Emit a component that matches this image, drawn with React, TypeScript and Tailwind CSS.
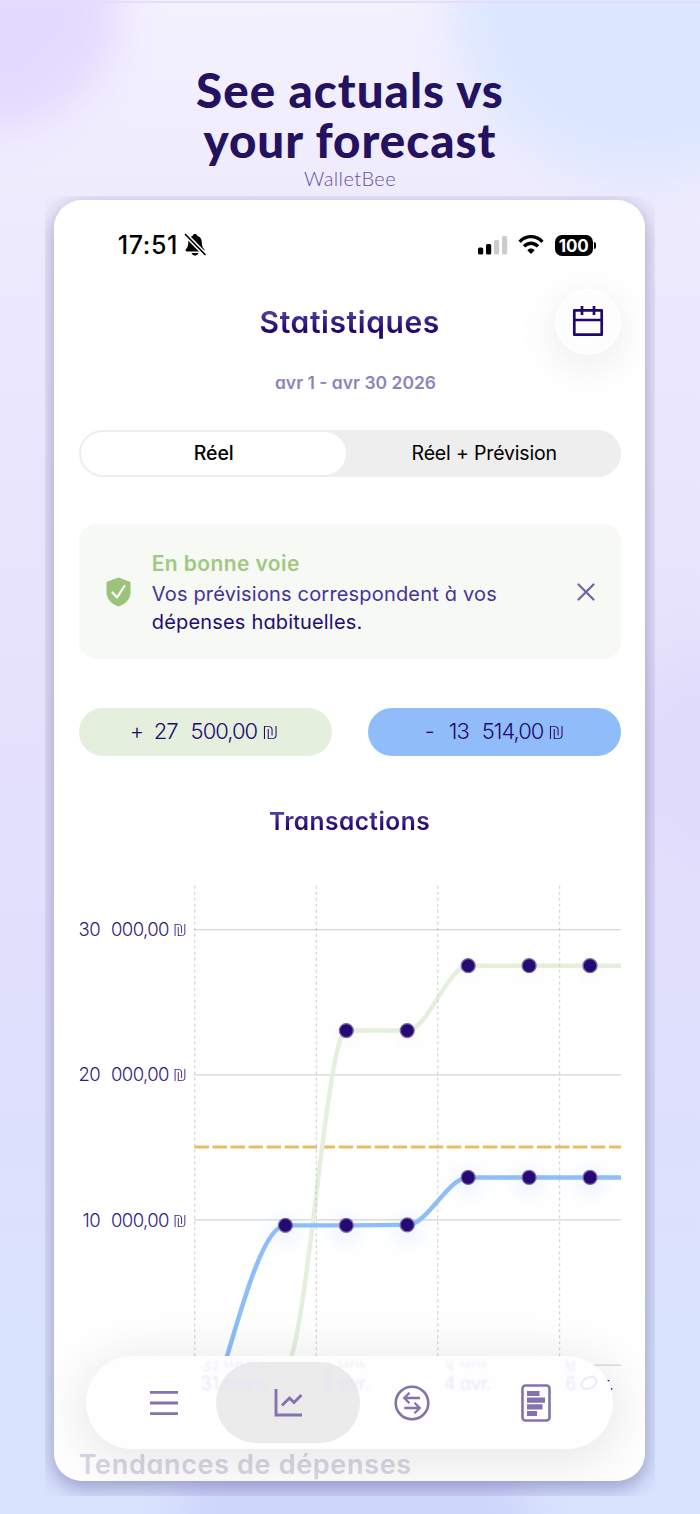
import React from "react";

const gradientText = "bg-[linear-gradient(180deg,#503d9c_22%,#210870_72%)] bg-clip-text text-transparent";

function StatusBar() {
  return (
    <div className="flex h-7 items-center pl-[63.500px] pr-[49px]">
      <span className="w-[62px] whitespace-nowrap text-[25px] leading-[26px] font-medium tracking-[0.6px] text-black">17:51</span>
      <svg className="ml-1" width="22" height="24" viewBox="0 0 22 24">
        <path d="M11 1c1.200 0 2 .7 2.200 1.700 3 .9 4.500 3.200 4.600 6.300.1 4 .8 5.500 2.300 7.100.9 1 .4 2.400-1 2.400H3c-1.400 0-1.900-1.400-1-2.400 1.500-1.600 2.200-3.100 2.300-7.100.1-3.100 1.600-5.400 4.500-6.300C9 1.700 9.800 1 11 1Z" />
        <path d="M7.500 20h7c-.5 1.500-1.800 2.500-3.500 2.500S8 21.500 7.500 20Z" />
        <path d="M1.500 1.500 21 21.500" stroke="#fff" strokeWidth="4.500" />
        <path d="M1.500 1.500 21 21.500" stroke="#000" strokeWidth="1.700" strokeLinecap="round" />
      </svg>
      <div className="ml-auto flex items-center">
        <svg width="30" height="20" viewBox="0 0 30 20">
          <rect x="0" y="12.500" width="5.200" height="7" rx="1.500" />
          <rect x="8" y="9" width="5.200" height="10.500" rx="1.500" />
          <rect x="16" y="5" width="5.200" height="14.500" rx="1.500" fill="#ccc" />
          <rect x="24" y="1" width="5.200" height="18.500" rx="1.500" fill="#ccc" />
        </svg>
        <svg className="ml-[10px]" width="26" height="20" viewBox="0 0 26 20" fill="none" stroke="#000">
          <path d="M1.600 6.800C8-.1 18-.1 24.400 6.800" strokeWidth="3.300" />
          <path d="M6 11.400c4.200-4.200 9.800-4.200 14 0" strokeWidth="3.300" />
          <path d="M9.300 15.200c2-2.200 5.400-2.200 7.400 0L13 19Z" fill="#000" stroke="none" />
        </svg>
        <div className="ml-[11px] flex h-[21px] w-[38px] items-center justify-center rounded-[7px] bg-black pt-px text-[17px] leading-5 font-bold tracking-[-0.1px] text-white">100</div>
        <div className="ml-px h-[7px] w-[2px] rounded-r-full bg-black" />
      </div>
    </div>
  );
}

function Shekel({ className }: { className: string }) {
  return <span className={`inline-block origin-left scale-x-[1.2] font-['Open_Sans'] font-light ${className}`}>₪</span>;
}

function Amount({ sign, thousands, rest, className }: { sign: string; thousands: string; rest: string; className: string }) {
  return (
    <div className={`flex h-[47.500px] w-[253px] items-center rounded-full text-[22px] font-light tracking-[-1px] text-[#210870] ${className}`}>
      <span className="w-6">{sign}</span>
      <span>{thousands}</span>
      <span className="ml-[13px]">{rest}</span>
      <Shekel className="ml-[5px] text-[19px]" />
    </div>
  );
}

function AxisLabel({ n }: { n: string }) {
  return (
    <div className="flex h-6 items-center justify-end text-[18.500px] font-light tracking-[-0.6px] text-[#321a80]">
      <span>{n}</span>
      <span className="ml-[11px]">000,00</span>
      <Shekel className="ml-[4px] mr-[3px] text-[16px]" />
    </div>
  );
}

const bluePoints = [[91, 356], [152, 356], [213, 355.5], [274, 308], [335, 308], [396, 308]];
const greenPoints = [[152, 161], [213, 161], [274, 96], [335, 96], [396, 96]];

function Chart() {
  return (
    <div className="flex h-[500px] w-[542px]">
      <div className="flex w-[108px] flex-col gap-[121.300px] pt-[48px]">
        <AxisLabel n="30" />
        <AxisLabel n="20" />
        <AxisLabel n="10" />
      </div>
      <svg className="ml-[7.500px]" width="427" height="500" viewBox="-0.5 0.5 427 500" fill="none">
        <defs>
          <filter id="halo" x="-200%" y="-200%" width="500%" height="500%"><feGaussianBlur stdDeviation="10" /></filter>
        </defs>
        {[60, 205.300, 350.500, 496].map((y) => <path key={y} d={`M0 ${y}H427`} stroke="#d5d5d5" strokeWidth="1.300" />)}
        {bluePoints.map(([x, y]) => <circle key={x} cx={x} cy={y + 5} r="14" fill="#8dbbff" opacity=".18" filter="url(#halo)" />)}
        {greenPoints.map(([x, y]) => <circle key={x} cx={x} cy={y + 5} r="14" fill="#e5f0dc" opacity=".2" filter="url(#halo)" />)}
        <path d="M0 277.500H427" stroke="#edbb60" strokeWidth="3" strokeDasharray="14.500 3.540" />
        <path d="M91 496C111.300 496 131.700 161 152 161H213C233.300 161 253.700 96 274 96H427" stroke="#e5f0dc" strokeWidth="4.500" />
        <path d="M30 496C50.300 426 70.700 356 91 356H152L213 355.500C233.300 355.500 253.700 308 274 308H427" stroke="#8dbdfb" strokeWidth="4.500" />
        {[0.2, 122, 243.500, 365.500].map((x) => <path key={x} d={`M${x} 16V496`} stroke="#bbb" strokeOpacity=".6" strokeWidth="1.300" strokeDasharray="3 3" />)}
        {[...bluePoints, ...greenPoints].map(([x, y]) => <circle key={`${x}-${y}`} cx={x} cy={y} r="7" fill="#240a72" stroke="#806bb0" strokeWidth="1.300" />)}
      </svg>
    </div>
  );
}

function TabBar() {
  const days = ["31 mars", "2 avr.", "4 avr.", "6"];
  return (
    <div className="absolute left-[31.500px] top-[1156px] h-[93px] w-[527px] rounded-full bg-[#fefefe] shadow-[0_8px_55px_6px_rgba(0,0,0,0.1)]">
      <div className="relative flex h-full items-center overflow-hidden rounded-full">
        <div className="w-[130px]" />
        <div className="h-[81px] w-[144px] rounded-full bg-[#ebebeb]" />
        <div className="absolute left-[115px] top-[5px] flex text-[18px] leading-[22px] font-light text-[#e6e0f8]">
          {days.map((d) => (
            <div key={d} className="w-[121.600px]">
              <div className="h-[12px] overflow-hidden blur-[1px] opacity-70"><div className="-mt-[9px] scale-y-[-1]">{d}</div></div>
              <div className="blur-[1.200px]">{d}</div>
            </div>
          ))}
        </div>
        <svg className="absolute left-[494px] top-[17px]" width="20" height="20" viewBox="0 0 20 20" fill="none" stroke="#efeafb" strokeWidth="2"><ellipse cx="9" cy="10" rx="8" ry="5.500" transform="rotate(-25 9 10)" /></svg>
        <div className="absolute inset-0 flex items-center">
          <svg className="ml-[64.500px]" width="28" height="28" viewBox="0 0 28 28" stroke="#8471b0" strokeWidth="2.800"><path d="M0 3.400H28M0 14H28M0 24.600H28" /></svg>
          <svg className="ml-[95.500px]" width="30" height="30" viewBox="0 0 30 30" fill="none" stroke="#8471b0" strokeWidth="2.900"><path d="M2 1V27H28M8 17.500 15.500 10 20 14.500 27.500 7" /></svg>
          <svg className="ml-[90px]" width="36" height="36" viewBox="0 0 36 36" fill="none" stroke="#8471b0" strokeWidth="2.300">
            <circle cx="18" cy="18" r="16.300" strokeWidth="2.600" />
            <path d="M26 13H10.500M15.500 7.800 10.300 13l5.200 5.200M10.300 23H25.500M20.500 17.800 25.700 23l-5.200 5.200" />
          </svg>
          <svg className="ml-[91px]" width="30" height="38" viewBox="0 0 30 38" fill="none" stroke="#8471b0" strokeWidth="2.600">
            <rect x="1.500" y="1.500" width="27" height="35" rx="3" />
            <path d="M6 9.500H18.500M6 16.200H24M6 22.900H21.500M6 29.500H16" strokeWidth="5.200" />
          </svg>
        </div>
      </div>
    </div>
  );
}

function Phone() {
  return (
    <div className="relative h-[1281px] w-[590.500px] overflow-hidden rounded-[28px] bg-white">
      <div className="h-[31px]" />
      <StatusBar />
      <div className="mt-[30px] flex h-[66px] items-center pl-[24.500px] pr-[24px]">
        <div className="w-[66px]" />
        <h2 className="flex-1 text-center text-[30px] leading-[44px] font-semibold tracking-[0.6px]"><span className={gradientText}>Statistiques</span></h2>
        <div className="flex size-[66px] items-center justify-center rounded-full border-2 border-white bg-[#fdfdfd] shadow-[0_10px_42px_4px_rgba(0,0,0,0.07)]">
          <svg className="-mt-[2px] ml-px" width="32" height="32" viewBox="0 0 32 32" fill="none" stroke="#210870" strokeWidth="2.700">
            <path d="M2.300 5.400H29.700V29.700H2.300ZM2.300 15H29.700M10 1V10M22 1V10" strokeLinejoin="round" />
          </svg>
        </div>
      </div>
      <p className="mt-[14px] pl-[12px] text-center text-[17.500px] leading-7 font-semibold tracking-[0px] text-[#9083bd]">avr 1 - avr 30 2026</p>
      <div className="ml-[24.500px] mt-[32.500px] flex h-[47.500px] w-[542px] rounded-full bg-[#eee] p-[2.500px] text-[19.500px] text-black font-[Inter] [font-feature-settings:normal]">
        <div className="flex w-[265px] items-center justify-center rounded-full bg-white pt-px font-medium tracking-[-0.1px]">Réel</div>
        <div className="flex flex-1 items-center justify-center pt-px pl-1 tracking-[-0.160px]">Réel + Prévision</div>
      </div>
      <div className="ml-[24.500px] mt-[47px] flex h-[135px] w-[542px] items-center rounded-[18px] bg-[#f7f9f5] pl-[27px] pr-[26px]">
        <svg width="25" height="30" viewBox="0 0 25 30">
          <path d="M12.500.5 24.500 5V15.500C24.500 22 19 27.500 12.500 29.500 6 27.500.5 22 .5 15.500V5Z" fill="#9bc37b" />
          <path d="M6.500 15.500 11 20.500 18.500 9" fill="none" stroke="#fff" strokeWidth="2.200" strokeLinecap="round" strokeLinejoin="round" />
        </svg>
        <div className="ml-[21px] flex-1 whitespace-nowrap">
          <div className="text-[21px] leading-[32px] font-semibold tracking-[0.400px] text-[#a1c883]">En bonne voie</div>
          <div className="text-[20px] leading-[28px] tracking-[0.180px] text-[#46329a]">Vos prévisions correspondent à vos</div>
          <div className="text-[20px] leading-[28px] tracking-[0.180px] text-[#230b73]">dépenses habituelles.</div>
        </div>
        <svg width="18" height="18" viewBox="0 0 18 18" stroke="#7563a8" strokeWidth="2.300" strokeLinecap="round"><path d="M1.500 1.500 16.500 16.500M16.500 1.500 1.500 16.500" /></svg>
      </div>
      <div className="mt-[49px] flex justify-between pl-[24.500px] pr-[24px]">
        <Amount sign="+" thousands="27" rest="500,00" className="bg-[#e5efdd] pl-[51px]" />
        <Amount sign="-" thousands="13" rest="514,00" className="bg-[#90bdfa] pl-[57px]" />
      </div>
      <h3 className="mt-[46px] text-center text-[24.500px] leading-[38px] font-semibold tracking-[0.450px]"><span className={gradientText}>Transactions</span></h3>
      <div className="ml-[24.500px] mt-[30.500px]"><Chart /></div>
      <div className="mt-[2px] h-[34px] pr-[31px] text-right text-[18px] leading-[24px] font-light text-[#321a80]">8 avr.</div>
      <h3 className="ml-[24.500px] mt-[39.500px] text-[27px] leading-[38px] font-semibold tracking-[0.660px] whitespace-nowrap text-[#d9d6e4]">Tendances de dépenses</h3>
      <TabBar />
    </div>
  );
}

export default function App() {
  return (
    <main className="relative h-[1514px] w-[700px] overflow-hidden bg-[linear-gradient(180deg,#f4f1ff_0%,#ece8fd_20%,#e5e1fc_50%,#dde0fd_75%,#d8e3fe_92%,#d8e3fe_100%)] font-['Inter',sans-serif] [font-feature-settings:'cv11']">
      <div className="absolute -left-[130px] -top-[120px] size-[250px] rounded-full bg-[#e4daff] blur-[20px]" />
      <div className="absolute left-[450px] -top-[190px] h-[370px] w-[380px] rounded-full bg-[#dce7ff] blur-[22px]" />
      <div className="absolute left-[610px] top-[650px] size-[230px] rounded-full bg-[#e1dbfb] blur-[26px]" />
      <div className="absolute left-[180px] top-[1420px] h-[200px] w-[350px] rounded-full bg-[#cfd6fc] blur-[18px]" />
      <div className="absolute left-0 top-[1px] h-[2px] w-full bg-[#e5ddfc]" />
      <div className="relative flex flex-col items-center">
        <h1 className="mt-[64.500px] text-center font-[Lato] text-[47.500px] leading-[50px] font-black tracking-[1px] text-[#24115f]">See actuals vs<br />your forecast</h1>
        <p className="font-[Lato] text-[20px] leading-[26px] font-light tracking-[0.4px] text-[#6250ac]">WalletBee</p>
        <div className="mt-[5.500px] h-[1300px] w-[609.500px] overflow-hidden pl-[9px] pt-[4px]">
          <div className="w-[590.500px] rounded-[28px] shadow-[0_6px_22px_rgba(40,20,100,0.38)]"><Phone /></div>
        </div>
      </div>
    </main>
  );
}
